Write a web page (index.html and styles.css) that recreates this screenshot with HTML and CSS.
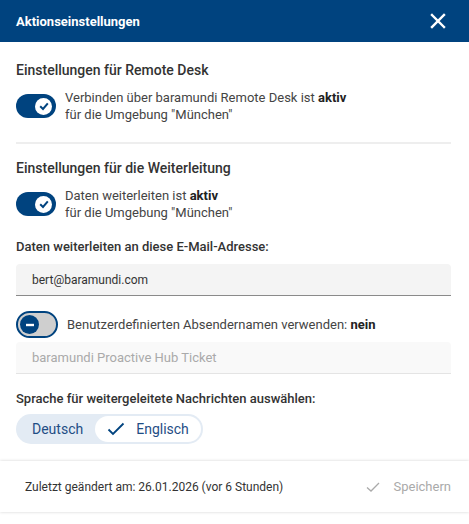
FILE: index.html
```html
<!DOCTYPE html>
<html lang="de">
<head>
    <meta charset="UTF-8">
    <meta name="viewport" content="width=device-width, initial-scale=1.0">
    <title>Aktionseinstellungen</title>
    <link rel="stylesheet" href="styles.css">
</head>
<body>
    <div class="dialog">
        <div class="dialog-header">
            <span class="dialog-title">Aktionseinstellungen</span>
            <svg class="close-icon" width="16" height="16" viewBox="0 0 16 16">
                <path d="M2 2 L14 14 M14 2 L2 14" stroke="#fff" stroke-width="2.4" stroke-linecap="square"/>
            </svg>
        </div>

        <div class="dialog-body">
            <div class="section">
                <h2 class="section-title">Einstellungen für Remote Desk</h2>
                <div class="toggle-row">
                    <div class="toggle on">
                        <span class="knob">
                            <svg width="16" height="16" viewBox="0 0 16 16">
                                <path d="M4.2 8.3 L7 11 L11.8 5.4" fill="none" stroke="#00437f" stroke-width="2"/>
                            </svg>
                        </span>
                    </div>
                    <div class="toggle-text">
                        Verbinden über baramundi Remote Desk ist <b>aktiv</b><br>
                        für die Umgebung "München"
                    </div>
                </div>
            </div>

            <div class="section">
                <h2 class="section-title">Einstellungen für die Weiterleitung</h2>
                <div class="toggle-row">
                    <div class="toggle on">
                        <span class="knob">
                            <svg width="16" height="16" viewBox="0 0 16 16">
                                <path d="M4.2 8.3 L7 11 L11.8 5.4" fill="none" stroke="#00437f" stroke-width="2"/>
                            </svg>
                        </span>
                    </div>
                    <div class="toggle-text">
                        Daten weiterleiten ist <b>aktiv</b><br>
                        für die Umgebung "München"
                    </div>
                </div>

                <label class="field-label">Daten weiterleiten an diese E-Mail-Adresse:</label>
                <div class="field email">bert@baramundi.com</div>

                <div class="toggle-row single">
                    <div class="toggle off">
                        <span class="knob">
                            <svg width="16" height="16" viewBox="0 0 16 16">
                                <path d="M4 8 H12" stroke="#fff" stroke-width="2.4"/>
                            </svg>
                        </span>
                    </div>
                    <div class="toggle-text">Benutzerdefinierten Absendernamen verwenden: <b>nein</b></div>
                </div>
                <div class="field disabled">baramundi Proactive Hub Ticket</div>

                <label class="field-label lang">Sprache für weitergeleitete Nachrichten auswählen:</label>
                <div class="segmented">
                    <span class="segment">Deutsch</span>
                    <span class="segment selected">
                        <svg width="18" height="14" viewBox="0 0 18 14">
                            <path d="M1.5 7.5 L6 12 L16.5 1.5" fill="none" stroke="#00437f" stroke-width="1.8"/>
                        </svg>
                        Englisch
                    </span>
                </div>
            </div>
        </div>

        <div class="dialog-footer">
            <span class="changed">Zuletzt geändert am: 26.01.2026 (vor 6 Stunden)</span>
            <span class="save">
                <svg width="14" height="12" viewBox="0 0 14 12">
                    <path d="M1 6.5 L5 10 L13 2" fill="none" stroke="#aaa" stroke-width="1.3"/>
                </svg>
                Speichern
            </span>
        </div>
    </div>
</body>
</html>
```

FILE: styles.css
```css
body {
    margin: 0;
    font-family: Roboto, "Noto Sans", sans-serif;
    color: #333;
    background: #fff;
}
.dialog {
    width: 469px;
    height: 524px;
    display: flex;
    flex-direction: column;
}
.dialog-header {
    height: 42px;
    background-color: #00437f;
    display: flex;
    align-items: center;
    justify-content: space-between;
    padding: 0 23px 0 16px;
}
.dialog-title {
    color: #fff;
    font-size: 13px;
    font-weight: bold;
}
.close-icon {
    display: block;
}
.dialog-body {
    padding: 0 18px 0 16px;
}
.section {
    padding-top: 16px;
}
.section:first-child {
    padding-top: 20px;
    padding-bottom: 19px;
    border-bottom: 2px solid #eee;
}
.section-title {
    margin: 0 0 11px 0;
    font-size: 14px;
    font-weight: 500;
    color: #333;
}
.toggle-row {
    display: flex;
    align-items: center;
    gap: 9px;
}
.toggle-text {
    font-size: 13px;
    line-height: 17px;
    color: #444;
}
.toggle-text b {
    font-weight: bold;
    color: #222;
}
.toggle {
    width: 40px;
    height: 24px;
    border-radius: 12px;
    box-sizing: border-box;
    display: flex;
    align-items: center;
    flex-shrink: 0;
}
.toggle.on {
    background-color: #00437f;
    justify-content: flex-end;
    padding-right: 4px;
}
.toggle.off {
    width: 42px;
    height: 27px;
    border-radius: 14px;
    background-color: #cfcfcf;
    border: 2px solid #00437f;
    padding-left: 2px;
}
.knob {
    width: 17px;
    height: 17px;
    border-radius: 50%;
    display: flex;
    align-items: center;
    justify-content: center;
}
.toggle.on .knob {
    background: #fff;
}
.toggle.off .knob {
    width: 19px;
    height: 19px;
    background: #00437f;
}
.field-label {
    display: block;
    margin: 18px 0 10px 0;
    font-size: 13px;
    font-weight: 500;
    color: #333;
}
.field {
    height: 31px;
    background: #f4f4f4;
    border-radius: 4px 4px 0 0;
    border-bottom: 1px solid #8a8a8a;
    padding: 0 16px;
    display: flex;
    align-items: center;
    font-size: 13px;
    color: #333;
    margin-bottom: 15px;
}
.field.email {
    font-size: 12px;
}
.field.disabled {
    background: #f9f9f9;
    border-bottom-color: #e4e4e4;
    color: #aaa;
    margin-bottom: 0;
}
.toggle-row.single {
    margin-bottom: 4px;
}
.field-label.lang {
    margin: 17px 0 8px 0;
}
.segmented {
    display: inline-flex;
    align-items: center;
    background: #e3ebf4;
    border-radius: 15px;
    height: 30px;
    padding: 0 2px 0 16px;
}
.segment {
    font-size: 14px;
    color: #1f4e85;
}
.segment.selected {
    display: flex;
    align-items: center;
    gap: 11px;
    margin-left: 12px;
    background: #fff;
    height: 26px;
    border-radius: 13px;
    padding: 0 12px 0 12px;
}
.dialog-footer {
    margin-top: auto;
    margin-bottom: 12px;
    height: 51px;
    display: flex;
    align-items: center;
    justify-content: space-between;
    padding: 0 18px 0 25px;
    box-shadow: 0 0 3px rgba(0,0,0,0.18);
    font-size: 12px;
}
.changed {
    color: #333;
}
.save {
    display: flex;
    align-items: center;
    gap: 13px;
    color: #aaa;
    font-size: 13px;
}
```
